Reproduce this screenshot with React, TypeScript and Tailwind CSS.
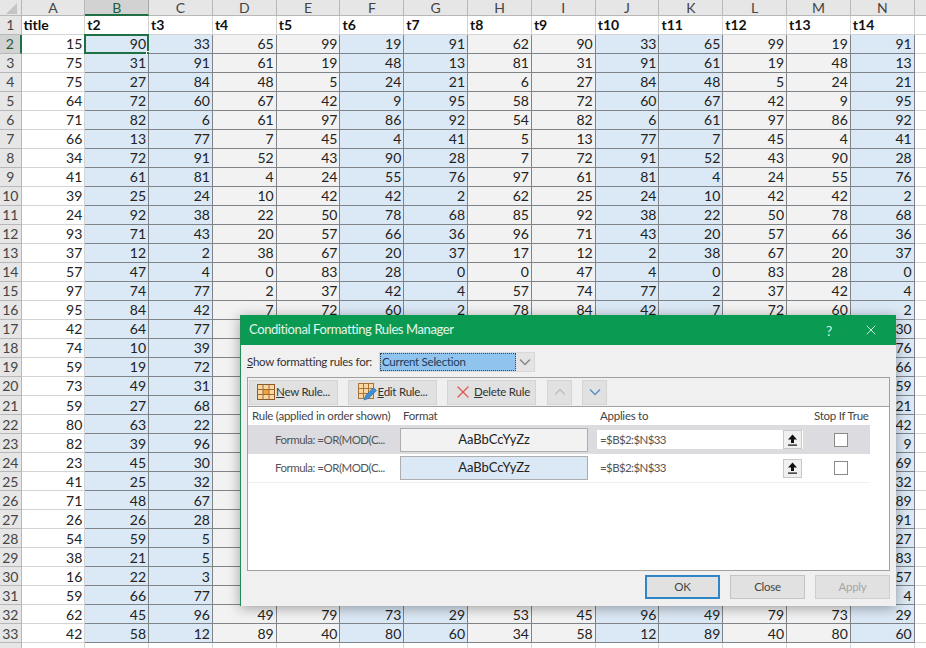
import { Fragment } from 'react';
import { X } from 'lucide-react';

const columns = ['A', 'B', 'C', 'D', 'E', 'F', 'G', 'H', 'I', 'J', 'K', 'L', 'M', 'N'];
const titles = ['title', 't2', 't3', 't4', 't5', 't6', 't7', 't8', 't9', 't10', 't11', 't12', 't13', 't14'];
const blueColumns = [1, 2, 5, 6, 9, 10, 13];

// A, then B..H; I..N repeat B..G. Nulls sit behind the dialog.
const rows: (number | null)[][] = [
  [15, 90, 33, 65, 99, 19, 91, 62],
  [75, 31, 91, 61, 19, 48, 13, 81],
  [75, 27, 84, 48, 5, 24, 21, 6],
  [64, 72, 60, 67, 42, 9, 95, 58],
  [71, 82, 6, 61, 97, 86, 92, 54],
  [66, 13, 77, 7, 45, 4, 41, 5],
  [34, 72, 91, 52, 43, 90, 28, 7],
  [41, 61, 81, 4, 24, 55, 76, 97],
  [39, 25, 24, 10, 42, 42, 2, 62],
  [24, 92, 38, 22, 50, 78, 68, 85],
  [93, 71, 43, 20, 57, 66, 36, 96],
  [37, 12, 2, 38, 67, 20, 37, 17],
  [57, 47, 4, 0, 83, 28, 0, 0],
  [97, 74, 77, 2, 37, 42, 4, 57],
  [95, 84, 42, 7, 72, 60, 2, 78],
  [42, 64, 77, null, null, null, 30, null],
  [74, 10, 39, null, null, null, 76, null],
  [59, 19, 72, null, null, null, 66, null],
  [73, 49, 31, null, null, null, 59, null],
  [59, 27, 68, null, null, null, 21, null],
  [80, 63, 22, null, null, null, 42, null],
  [82, 39, 96, null, null, null, 9, null],
  [23, 45, 30, null, null, null, 69, null],
  [41, 25, 32, null, null, null, 32, null],
  [71, 48, 67, null, null, null, 89, null],
  [26, 26, 28, null, null, null, 91, null],
  [54, 59, 5, null, null, null, 27, null],
  [38, 21, 5, null, null, null, 83, null],
  [16, 22, 3, null, null, null, 57, null],
  [59, 66, 77, null, null, null, 4, null],
  [62, 45, 96, 49, 79, 73, 29, 53],
  [42, 58, 12, 89, 40, 80, 60, 34],
];

function Sheet() {
  return (
    <div className="grid grid-cols-[21.5px_repeat(14,63.8px)_1fr] grid-rows-[16px_18.7px_repeat(33,19.02px)] font-['Lato',sans-serif] text-[14px] text-[#222]">
      <div className="border-r border-b border-[#b8b8b8] bg-[#e6e6e6] overflow-hidden">
        <svg width="21" height="16"><polygon points="17,3 17,14 6,14" fill="#c4c4c4" /></svg>
      </div>
      {columns.map((c, i) => (
        <div
          key={c}
          className={
            i === 1
              ? 'flex items-center justify-center border-r border-b-2 border-r-[#a8a8a8] border-b-[#1f7145] bg-[#d2d2d2] text-[#1f5c3a]'
              : 'flex items-center justify-center border-r border-b border-[#b8b8b8] bg-[#e6e6e6] text-[#444]'
          }
        >
          {c}
        </div>
      ))}
      <div className="border-b border-[#b8b8b8] bg-[#e6e6e6]" />

      <div className="flex items-center justify-center border-r border-b border-[#b8b8b8] bg-[#e6e6e6] text-[#444]">1</div>
      {titles.map((t) => (
        <div key={t} className="flex items-center border-r border-b border-[#d4d4d4] bg-white pl-[2px] font-bold text-[#111]">
          {t}
        </div>
      ))}
      <div className="border-b border-[#d4d4d4]" />

      {rows.map((row, r) => {
        const cells = [...row, ...row.slice(1, 7)];
        return (
          <Fragment key={r}>
            <div
              className={
                r === 0
                  ? 'flex items-center justify-center border-r-2 border-b border-r-[#1f7145] border-b-[#b8b8b8] bg-[#d2d2d2] text-[#1f5c3a]'
                  : 'flex items-center justify-center border-r border-b border-[#b8b8b8] bg-[#e6e6e6] text-[#444]'
              }
            >
              {r + 2}
            </div>
            {cells.map((v, c) => (
              <div
                key={c}
                className={
                  c === 0
                    ? 'flex items-center justify-end border-r border-b border-[#d4d4d4] bg-white pr-[2px]'
                    : blueColumns.includes(c)
                      ? 'relative flex items-center justify-end border-r border-b border-[#7f8488] bg-[#dbe8f5] pr-[2px]'
                      : 'relative flex items-center justify-end border-r border-b border-[#7f8488] bg-[#f2f2f2] pr-[2px]'
                }
              >
                {v}
                {r === 0 && c === 1 && (
                  <>
                    <div className="absolute -top-px -left-px -right-px -bottom-px border-2 border-[#1f7145]" />
                    <div className="absolute -right-[4px] -bottom-[4px] h-[6px] w-[6px] border border-white bg-[#1f7145]" />
                  </>
                )}
              </div>
            ))}
            <div className="border-b border-[#d4d4d4]" />
          </Fragment>
        );
      })}

      <div className="border-r border-[#b8b8b8] bg-[#e6e6e6]" />
      {columns.map((c) => (
        <div key={c} className="border-r border-[#d4d4d4]" />
      ))}
    </div>
  );
}

function NewRuleIcon() {
  return (
    <svg width="18" height="16" viewBox="0 0 18 16">
      <rect x="0.5" y="0.5" width="17" height="15" fill="#fbd7a4" stroke="#8a5a2a" />
      <rect x="6" y="5.5" width="6" height="5" fill="#f2a13e" />
      <path d="M6 0.5V15.5M12 0.5V15.5M0.5 5.5H17.5M0.5 10.5H17.5" stroke="#9a6a34" fill="none" />
    </svg>
  );
}

function EditRuleIcon() {
  return (
    <svg width="20" height="18" viewBox="0 0 20 18">
      <rect x="0.5" y="0.5" width="15" height="15" fill="#fbd7a4" stroke="#a8733a" />
      <path d="M5.5 0.5V15.5M10.5 0.5V15.5M0.5 5.5H15.5M0.5 10.5H15.5" stroke="#a8733a" fill="none" />
      <path d="M6 17L7.5 12.5L15.5 4.5L18.5 7.5L10.5 15.5Z" fill="#3d8fd6" stroke="#2c6ea8" strokeWidth="0.6" />
    </svg>
  );
}

function ToolButton({ icon, width, children }: { icon: React.ReactNode; width: string; children?: React.ReactNode }) {
  return (
    <div className={`flex h-[25px] items-center justify-center border border-[#d4d4d4] bg-[#e1e1e1] text-[#333] ${width}`}>
      {icon}
      {children}
    </div>
  );
}

function Chevron({ dir, color }: { dir: 'up' | 'down'; color: string }) {
  return (
    <svg width="12" height="8" viewBox="0 0 12 8">
      <path d={dir === 'up' ? 'M1 6.5L6 1.5L11 6.5' : 'M1 1.5L6 6.5L11 1.5'} stroke={color} strokeWidth="1.5" fill="none" />
    </svg>
  );
}

function RuleRow({ selected, preview }: { selected?: boolean; preview: string }) {
  return (
    <div className={selected ? 'flex h-[29px] w-[622px] items-center bg-[#dcdce0]' : 'flex h-[29px] w-[622px] items-center border-b border-[#f0f0f0]'}>
      <div className="w-[152px] shrink-0 pl-[27px] tracking-[-0.5px] whitespace-nowrap text-[#555]">Formula: =OR(MOD(C...</div>
      <div className={`flex h-[24px] w-[188px] shrink-0 items-center justify-center border border-[#adadad] text-[13px] tracking-normal text-[#222] ${preview}`}>
        AaBbCcYyZz
      </div>
      <div className="ml-[9px] flex h-[19px] w-[206px] shrink-0 items-center justify-between bg-white pr-px pl-[3px] tracking-[-0.6px] text-[#555]">
        =$B$2:$N$33
        <div className="flex h-[19px] w-[19px] items-center justify-center border border-[#c8c8c8] bg-[#f0f0f0]">
          <svg width="11" height="12" viewBox="0 0 11 12">
            <path d="M5.5 0.5L10 5.5H7V9H4V5.5H1Z" fill="#111" />
            <rect x="1" y="10.5" width="9" height="1.2" fill="#111" />
          </svg>
        </div>
      </div>
      <div className="ml-[31px] h-[14px] w-[14px] shrink-0 border border-[#8a8a8a] bg-white" />
    </div>
  );
}

function DialogButton({ label, variant }: { label: string; variant?: 'default' | 'disabled' }) {
  const look =
    variant === 'default'
      ? 'border-2 border-[#2f86c6] text-[#444]'
      : variant === 'disabled'
        ? 'border border-[#cfcfcf] text-[#a6a6a6]'
        : 'border border-[#c4c4c4] text-[#444]';
  return <div className={`flex h-[24px] w-[75px] items-center justify-center bg-[#e1e1e1] ${look}`}>{label}</div>;
}

function Dialog() {
  return (
    <div className="absolute top-[315px] left-[240px] flex h-[291px] w-[656px] flex-col border-l border-[#1f8f58] bg-[#f0f0f0] font-['Lato',sans-serif] text-[11.5px] tracking-[-0.25px] text-[#333] shadow-[0_2px_12px_rgba(0,0,0,0.35)]">
      <div className="flex h-[30px] shrink-0 items-center justify-between bg-[#0a9a52] pr-[17px] pl-[8px] text-white">
        <span className="text-[13px] tracking-[-0.4px] whitespace-nowrap text-[#e4f5eb]">Conditional Formatting Rules Manager</span>
        <div className="flex items-center gap-[31px]">
          <span className="text-[14px] text-[#d8f0e2]">?</span>
          <X size={16} strokeWidth={1.2} />
        </div>
      </div>
      <div className="flex flex-1 flex-col px-[6px] pt-[7px]">
        <div className="flex h-[20px] items-center">
          <span className="w-[132px] whitespace-nowrap"><u>S</u>how formatting rules for:</span>
          <div className="flex h-[20px] w-[156px] items-center border border-[#d8d8d8] bg-[#e4e4e4]">
            <div className="flex h-[18px] w-[136px] items-center border border-dotted border-[#444] bg-[#90c4ee] pl-[1px] text-[#1a3a5c]">Current Selection</div>
            <div className="flex flex-1 items-center justify-center">
              <Chevron dir="down" color="#888" />
            </div>
          </div>
        </div>
        <div className="mt-[5px] flex h-[194px] flex-col border border-[#a0a0a0]">
          <div className="flex h-[28px] shrink-0 items-center gap-[10px] pl-[1px]">
            <ToolButton icon={<NewRuleIcon />} width="w-[89px]"><span className="ml-px"><u>N</u>ew Rule...</span></ToolButton>
            <ToolButton icon={<EditRuleIcon />} width="w-[89px]"><span><u>E</u>dit Rule...</span></ToolButton>
            <ToolButton icon={<X size={20} strokeWidth={1.5} color="#e05555" />} width="w-[89px]"><span className="ml-px"><u>D</u>elete Rule</span></ToolButton>
            <ToolButton icon={<Chevron dir="up" color="#c0c0c0" />} width="ml-px w-[25px]" />
            <ToolButton icon={<Chevron dir="down" color="#5a92c4" />} width="w-[25px]" />
          </div>
          <div className="flex-1 border-t border-[#a0a0a0] bg-white">
            <div className="flex h-[18px] w-[622px] items-center whitespace-nowrap text-[#444]">
              <div className="w-[152px] pl-[4px]">Rule (applied in order shown)</div>
              <div className="w-[197px] pl-[3px]">Format</div>
              <div className="w-[217px] pl-[3px]">Applies to</div>
              <div>Stop If True</div>
            </div>
            <RuleRow selected preview="bg-[#f2f2f2]" />
            <RuleRow preview="bg-[#dbe8f5]" />
          </div>
        </div>
        <div className="mt-[4px] flex justify-end gap-[10px]">
          <DialogButton label="OK" variant="default" />
          <DialogButton label="Close" />
          <DialogButton label="Apply" variant="disabled" />
        </div>
      </div>
    </div>
  );
}

export default function App() {
  return (
    <div className="relative h-[648px] w-[926px] overflow-hidden bg-white">
      <Sheet />
      <Dialog />
    </div>
  );
}
